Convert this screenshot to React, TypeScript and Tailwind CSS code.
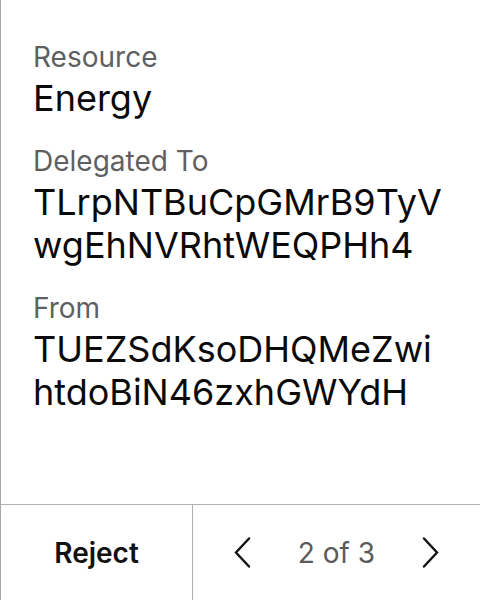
const fields = [
  { label: "Resource", value: "Energy" },
  { label: "Delegated To", value: "TLrpNTBuCpGMrB9TyVwgEhNVRhtWEQPHh4" },
  { label: "From", value: "TUEZSdKsoDHQMeZwihtdoBiN46zxhGWYdH" },
];

function Chevron({ dir }: { dir: "left" | "right" }) {
  const points = dir === "left" ? "15,1.5 2,15.5 15,29.5" : "2,1.5 15,15.5 2,29.5";
  return (
    <svg width="17" height="31" viewBox="0 0 17 31" fill="none">
      <polyline points={points} stroke="#111" strokeWidth="2.4" strokeLinecap="round" strokeLinejoin="miter" />
    </svg>
  );
}

export default function App() {
  return (
    <div className="w-[480px] h-[600px] flex flex-col bg-white border-l border-[#a8a8a8] font-['Inter',sans-serif]">
      <div className="flex-1 pl-[32px] pr-[35px] pt-[40px] flex flex-col gap-[24px]">
        {fields.map((f) => (
          <div key={f.label} className="flex flex-col gap-[3px]">
            <span className="text-[28px] leading-[34px] text-[#5f5f5f]">{f.label}</span>
            <span className="text-[36px] leading-[43px] text-[#0a0a0a] break-all">{f.value}</span>
          </div>
        ))}
      </div>
      <div className="h-[96px] flex border-t border-[#b0b0b0]">
        <button className="w-[192px] flex items-center justify-center border-r border-[#b0b0b0] text-[28px] font-semibold text-[#111]">
          Reject
        </button>
        <div className="flex-1 flex items-center justify-center gap-[47px]">
          <Chevron dir="left" />
          <span className="text-[28px] text-[#5a5a5a]">2 of 3</span>
          <Chevron dir="right" />
        </div>
      </div>
    </div>
  );
}
